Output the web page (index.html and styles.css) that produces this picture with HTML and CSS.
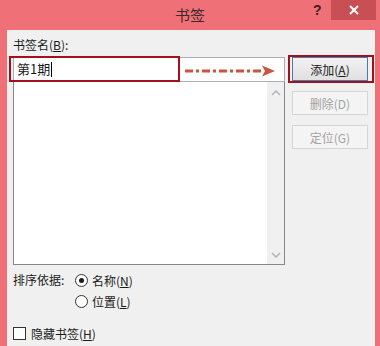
FILE: index.html
```html
<!DOCTYPE html>
<html lang="zh-CN">
<head>
    <meta charset="UTF-8">
    <title>书签</title>
    <link rel="stylesheet" href="styles.css">
</head>
<body>
    <div class="window">
        <!-- Title bar -->
        <div class="titlebar">
            <span class="title">书签</span>
            <span class="help">?</span>
            <span class="close">
                <svg width="12" height="10" viewBox="0 0 12 10"><path d="M2 1 L10 9 M10 1 L2 9" stroke="#fff" stroke-width="2"/></svg>
            </span>
        </div>

        <!-- Dialog body -->
        <div class="content">
            <div class="main">
                <div class="left">
                    <div class="label">书签名(<u>B</u>):</div>
                    <div class="input">第1期<span class="caret"></span></div>
                    <div class="list">
                        <div class="scroll">
                            <svg width="10" height="6" viewBox="0 0 10 6"><path d="M1 5 L5 1 L9 5" fill="none" stroke="#b4b4b4" stroke-width="1.5"/></svg>
                            <svg width="10" height="6" viewBox="0 0 10 6"><path d="M1 1 L5 5 L9 1" fill="none" stroke="#b4b4b4" stroke-width="1.5"/></svg>
                        </div>
                    </div>
                </div>
                <div class="buttons">
                    <button class="btn default">添加(<u>A</u>)</button>
                    <button class="btn" disabled>删除(D)</button>
                    <button class="btn" disabled>定位(G)</button>
                </div>
            </div>

            <div class="sort">
                <span class="sort-label">排序依据:</span>
                <div class="options">
                    <div class="option"><span class="radio checked"></span>名称(<u>N</u>)</div>
                    <div class="option"><span class="radio"></span>位置(<u>L</u>)</div>
                </div>
            </div>

            <div class="option hidden-row"><span class="check"></span>隐藏书签(<u>H</u>)</div>
        </div>

        <!-- Annotation marks -->
        <div class="mark mark-input"></div>
        <div class="mark mark-add"></div>
        <svg class="arrow" width="92" height="14" viewBox="0 0 92 14">
            <path d="M0 7 H78" stroke="#c9553f" stroke-width="3" stroke-dasharray="8 3 3 3"/>
            <path d="M77 1.5 L90 7 L77 12.5 L80 7 Z" fill="#c9553f"/>
        </svg>
    </div>
</body>
</html>
```

FILE: styles.css
```css
body {
    margin: 0;
    padding: 0;
    overflow: hidden;
    font-family: "Noto Sans CJK SC", "Noto Sans", sans-serif;
    font-size: 12px;
    color: #1a1a1a;
}

.window {
    position: relative;
    width: 380px;
    height: 346px;
    background-color: #ef7076;
}

.titlebar {
    position: relative;
    height: 30px;
    text-align: center;
}

.title {
    font-size: 15px;
    line-height: 30px;
    color: #3a2a2a;
}

.help {
    position: absolute;
    left: 313px;
    top: 2px;
    font-family: "Liberation Sans", sans-serif;
    font-size: 14px;
    font-weight: bold;
    color: #3a2020;
}

.close {
    position: absolute;
    left: 331px;
    top: 0;
    width: 45px;
    height: 20px;
    background-color: #c84f54;
    display: flex;
    align-items: center;
    justify-content: center;
}

.content {
    margin: 0 5px 0 7px;
    height: 316px;
    background-color: #f0f0f0;
    padding: 8px 0 0 6px;
    box-sizing: border-box;
}

.main {
    display: flex;
}

.left {
    width: 272px;
}

.label {
    height: 18px;
    line-height: 14px;
}

.input {
    margin-top: 1px;
    height: 25px;
    box-sizing: border-box;
    border: 1px solid #abadb3;
    background-color: #fff;
    padding-left: 3px;
    line-height: 22px;
    font-size: 13px;
}

.caret {
    display: inline-block;
    width: 1px;
    height: 15px;
    background-color: #000;
    vertical-align: -3px;
    margin-left: 1px;
}

.list {
    height: 183px;
    box-sizing: border-box;
    border: 1px solid #828790;
    border-top: none;
    background-color: #fff;
    display: flex;
    justify-content: flex-end;
}

.scroll {
    width: 17px;
    background-color: #f0f0f0;
    display: flex;
    flex-direction: column;
    justify-content: space-between;
    align-items: center;
    padding: 8px 0 6px;
}

.buttons {
    margin-left: 7px;
    padding-top: 19px;
    display: flex;
    flex-direction: column;
    gap: 10px;
}

.btn {
    width: 76px;
    height: 24px;
    font-family: inherit;
    font-size: 12px;
    border: 1px solid #d5d5d5;
    background-color: #f4f4f4;
    color: #a3a3a3;
    padding: 0;
}

.btn.default {
    border-color: #3c7fb1;
    background: linear-gradient(#f2f2f2, #e0e0e0);
    color: #1a1a1a;
}

.sort {
    display: flex;
    margin-top: 7px;
}

.sort-label {
    line-height: 16px;
    width: 62px;
}

.options {
    display: flex;
    flex-direction: column;
    gap: 5px;
}

.option {
    display: flex;
    align-items: center;
    height: 16px;
}

.radio {
    width: 11px;
    height: 11px;
    border: 1px solid #333;
    border-radius: 50%;
    background-color: #fff;
    margin-right: 4px;
    position: relative;
}

.radio.checked::after {
    content: "";
    position: absolute;
    left: 3px;
    top: 3px;
    width: 5px;
    height: 5px;
    border-radius: 50%;
    background-color: #1a1a1a;
}

.hidden-row {
    margin-top: 16px;
}

.check {
    width: 11px;
    height: 11px;
    border: 1px solid #333;
    background-color: #fff;
    margin-right: 5px;
}

.mark {
    position: absolute;
    border: 2px solid #a3101c;
    box-sizing: border-box;
}

.mark-input {
    left: 9px;
    top: 56px;
    width: 171px;
    height: 26px;
}

.mark-add {
    left: 288px;
    top: 55px;
    width: 86px;
    height: 28px;
}

.arrow {
    position: absolute;
    left: 185px;
    top: 64px;
}
```
